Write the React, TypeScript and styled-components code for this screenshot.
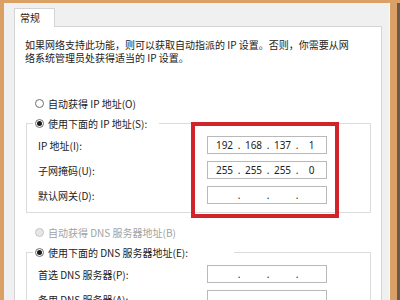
import React from "react";
import styled, { createGlobalStyle } from "styled-components";

const Global = createGlobalStyle`
  html, body { margin: 0; padding: 0; background: #dba065; }
  body { font-family: "Noto Sans CJK SC", "Noto Sans", sans-serif; }
`;

const Frame = styled.div`
  width: 400px;
  height: 300px;
  box-sizing: border-box;
  display: flex;
  overflow: hidden;
  background: #dba065;
  padding: 3px 0 0 4px;
`;

const Window = styled.div`
  width: 386px;
  flex: none;
  box-sizing: border-box;
  background: #f0f0f0;
  border-right: 1px solid #fbfbfb;
  padding: 5px 7px 0 10px;
  display: flex;
  flex-direction: column;
`;

const OrangeStrip = styled.div`
  width: 7px;
  flex: none;
  background: #dba065;
`;

const DarkEdge = styled.div`
  width: 3px;
  flex: none;
  background: #6a5a4c;
`;

const TabStrip = styled.div`
  display: flex;
  height: 18px;
  flex: none;
`;

const Tab = styled.div`
  position: relative;
  z-index: 1;
  width: 41px;
  height: 19px;
  box-sizing: border-box;
  background: #fff;
  border: 1px solid #d4d4d4;
  border-bottom: none;
  padding-left: 5px;
  font-size: 10px;
  line-height: 18px;
  color: #222;
`;

const Panel = styled.div`
  position: relative;
  flex: 1;
  background: #fff;
  border: 1px solid #d4d4d4;
  border-bottom: none;
  padding: 11px 0 0 10px;
  display: flex;
  flex-direction: column;
  align-items: flex-start;
`;

const Intro = styled.p`
  margin: 0 0 31px;
  font-size: 10px;
  line-height: 13px;
  color: #222;
  white-space: nowrap;
`;

const RadioRow = styled.div<{ $disabled?: boolean }>`
  display: flex;
  align-items: center;
  height: 16px;
  margin-left: 10px;
  font-size: 10px;
  color: ${(p) => (p.$disabled ? "#a2a2a2" : "#222")};
  white-space: nowrap;
`;

const Radio = styled.span<{ $checked?: boolean; $disabled?: boolean }>`
  width: 9px;
  height: 9px;
  flex: none;
  box-sizing: border-box;
  border-radius: 50%;
  border: 1px solid ${(p) => (p.$disabled ? "#c6c6c6" : "#6e6e6e")};
  background: ${(p) => (p.$disabled ? "#e6e6e6" : "#fff")};
  margin-right: 4px;
  display: flex;
  align-items: center;
  justify-content: center;
  &::after {
    content: "";
    width: 5px;
    height: 5px;
    border-radius: 50%;
    background: #1a1a1a;
    display: ${(p) => (p.$checked ? "block" : "none")};
  }
`;

const Group = styled.fieldset<{ $gapAfter?: number }>`
  margin: 4px 0 ${(p) => p.$gapAfter ?? 0}px 1px;
  width: 345px;
  min-width: 0;
  box-sizing: border-box;
  border: 1px solid #dcdcdc;
  padding: 5px 0 8px 6px;
`;

const Legend = styled.legend<{ $trail: number }>`
  padding: 0 ${(p) => p.$trail}px 0 2px;
  height: 16px;
  display: flex;
  align-items: center;
  font-size: 10px;
  color: #222;
  white-space: nowrap;
`;

const Fields = styled.div`
  margin-left: 5px;
  display: grid;
  grid-template-columns: 169px 120px;
  grid-auto-rows: 18px;
  row-gap: 7px;
  align-items: center;
`;

const FieldLabel = styled.span`
  font-size: 10px;
  color: #222;
  white-space: nowrap;
`;

const IpBox = styled.div`
  height: 18px;
  box-sizing: border-box;
  border: 1px solid #b9b9b9;
  background: #fff;
  padding-left: 4px;
  display: grid;
  grid-template-columns: 25px 4px 25px 4px 25px 4px 25px;
  align-items: center;
  font-family: "Noto Sans", "Noto Sans CJK SC", sans-serif;
  font-size: 10px;
  color: #222;
`;

const Octet = styled.span`
  text-align: center;
`;

const Dot = styled.span`
  text-align: center;
`;

const Highlight = styled.div`
  position: absolute;
  left: 176px;
  top: 95px;
  width: 148px;
  height: 96px;
  box-sizing: border-box;
  border: 4px solid #d2232a;
  pointer-events: none;
`;

function IpInput({ value }: { value?: [string, string, string, string] }) {
  const v = value ?? ["", "", "", ""];
  return (
    <IpBox>
      <Octet>{v[0]}</Octet>
      <Dot>.</Dot>
      <Octet>{v[1]}</Octet>
      <Dot>.</Dot>
      <Octet>{v[2]}</Octet>
      <Dot>.</Dot>
      <Octet>{v[3]}</Octet>
    </IpBox>
  );
}

export default function App() {
  return (
    <>
      <Global />
      <Frame>
        <Window>
          <TabStrip>
            <Tab>常规</Tab>
          </TabStrip>
          <Panel>
            <Intro>
              如果网络支持此功能，则可以获取自动指派的 IP 设置。否则，你需要从网
              <br />
              络系统管理员处获得适当的 IP 设置。
            </Intro>

            <RadioRow>
              <Radio />
              自动获得 IP 地址(O)
            </RadioRow>
            <Group $gapAfter={11}>
              <Legend $trail={12}>
                <Radio $checked />
                使用下面的 IP 地址(S):
              </Legend>
              <Fields>
                <FieldLabel>IP 地址(I):</FieldLabel>
                <IpInput value={["192", "168", "137", "1"]} />
                <FieldLabel>子网掩码(U):</FieldLabel>
                <IpInput value={["255", "255", "255", "0"]} />
                <FieldLabel>默认网关(D):</FieldLabel>
                <IpInput />
              </Fields>
            </Group>

            <RadioRow $disabled>
              <Radio $disabled />
              自动获得 DNS 服务器地址(B)
            </RadioRow>
            <Group>
              <Legend $trail={46}>
                <Radio $checked />
                使用下面的 DNS 服务器地址(E):
              </Legend>
              <Fields>
                <FieldLabel>首选 DNS 服务器(P):</FieldLabel>
                <IpInput />
                <FieldLabel>备用 DNS 服务器(A):</FieldLabel>
                <IpInput />
              </Fields>
            </Group>

            <Highlight />
          </Panel>
        </Window>
        <OrangeStrip />
        <DarkEdge />
      </Frame>
    </>
  );
}
